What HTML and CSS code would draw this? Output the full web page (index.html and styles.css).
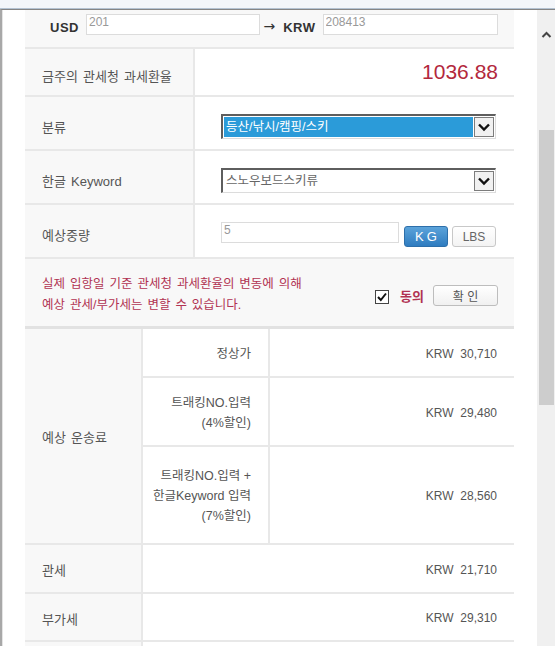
FILE: index.html
```html
<!DOCTYPE html>
<html lang="ko">
<head>
    <meta charset="UTF-8">
    <meta name="viewport" content="width=device-width, initial-scale=1.0">
    <title>예상 관세/부가세 계산</title>
    <link rel="stylesheet" href="styles.css">
</head>
<body>
    <!-- Window chrome (address bar edge) -->
    <div class="chrome"></div>

    <div class="window">
        <div class="page">
            <div class="panel">
                <!-- Currency conversion -->
                <div class="row row-rate">
                    <span class="cur">USD</span>
                    <input class="field field-usd" type="text" value="201">
                    <span class="arrow">→</span>
                    <span class="cur">KRW</span>
                    <input class="field field-krw" type="text" value="208413">
                </div>

                <div class="row row-exchange">
                    <div class="label">금주의 관세청 과세환율</div>
                    <div class="value value-rate">1036.88</div>
                </div>

                <div class="row row-form">
                    <div class="label">분류</div>
                    <div class="value">
                        <div class="select">
                            <span class="select-text select-active">등산/낚시/캠핑/스키</span>
                            <span class="select-arrow">
                                <svg width="14" height="9" viewBox="0 0 14 9"><path d="M2 1.5 L7 6.5 L12 1.5" fill="none" stroke="#111" stroke-width="2.4"/></svg>
                            </span>
                        </div>
                    </div>
                </div>

                <div class="row row-form">
                    <div class="label">한글 Keyword</div>
                    <div class="value">
                        <div class="select">
                            <span class="select-text">스노우보드스키류</span>
                            <span class="select-arrow">
                                <svg width="14" height="9" viewBox="0 0 14 9"><path d="M2 1.5 L7 6.5 L12 1.5" fill="none" stroke="#111" stroke-width="2.4"/></svg>
                            </span>
                        </div>
                    </div>
                </div>

                <div class="row row-form">
                    <div class="label">예상중량</div>
                    <div class="value value-weight">
                        <input class="field field-weight" type="text" value="5">
                        <button class="unit unit-on">KG</button>
                        <button class="unit">LBS</button>
                    </div>
                </div>

                <!-- Notice + agreement -->
                <div class="notice">
                    <p class="notice-text">실제 입항일 기준 관세청 과세환율의 변동에 의해<br>예상 관세/부가세는 변할 수 있습니다.</p>
                    <div class="agree">
                        <span class="check">
                            <svg width="12" height="12" viewBox="0 0 12 12"><path d="M2 6 L4.8 9 L10 2.5" fill="none" stroke="#111" stroke-width="2"/></svg>
                        </span>
                        <span class="agree-label">동의</span>
                        <button class="confirm">확 인</button>
                    </div>
                </div>

                <!-- Shipping fee -->
                <div class="fee">
                    <div class="fee-label">예상 운송료</div>
                    <div class="fee-rows">
                        <div class="fee-row fee-row-1">
                            <div class="sub">정상가</div>
                            <div class="amount">KRW&nbsp;&nbsp;30,710</div>
                        </div>
                        <div class="fee-row fee-row-2">
                            <div class="sub">트래킹NO.입력<br>(4%할인)</div>
                            <div class="amount">KRW&nbsp;&nbsp;29,480</div>
                        </div>
                        <div class="fee-row fee-row-3">
                            <div class="sub">트래킹NO.입력 +<br>한글Keyword 입력<br>(7%할인)</div>
                            <div class="amount">KRW&nbsp;&nbsp;28,560</div>
                        </div>
                    </div>
                </div>

                <div class="sum-row sum-row-1">
                    <div class="sum-label">관세</div>
                    <div class="amount">KRW&nbsp;&nbsp;21,710</div>
                </div>
                <div class="sum-row sum-row-2">
                    <div class="sum-label">부가세</div>
                    <div class="amount">KRW&nbsp;&nbsp;29,310</div>
                </div>
                <div class="sum-row">
                    <div class="sum-label"></div>
                    <div class="amount"></div>
                </div>
            </div>
        </div>

        <!-- Scrollbar -->
        <div class="scrollbar">
            <span class="scroll-up">
                <svg width="11" height="7" viewBox="0 0 11 7"><path d="M1.5 6 L5.5 2 L9.5 6" fill="none" stroke="#444" stroke-width="2"/></svg>
            </span>
            <span class="scroll-thumb"></span>
        </div>
    </div>
</body>
</html>
```

FILE: styles.css
```css
/* General page */
body {
    margin: 0;
    font-family: "Liberation Sans", "Noto Sans CJK KR", sans-serif;
    font-size: 12px;
    color: #555;
    background-color: #fff;
    overflow: hidden;
}

/* Window chrome */
.chrome {
    height: 8px;
    background-color: #f3f6fa;
    border-bottom: 1px solid #b3c2d2;
}

.window {
    display: flex;
    border-top: 1px solid #858585;
    border-left: 2px solid #a8a8a8;
    height: 640px;
}

.page {
    flex: 1;
    padding-left: 22px;
    border-left: 1px solid #e4e4e4;
}

.panel {
    width: 489px;
    background-color: #f8f8f8;
}

/* Rows */
.row {
    display: flex;
    box-sizing: border-box;
    border-bottom: 2px solid #e8e8e8;
}

.row-exchange {
    height: 48px;
}

.row-form {
    height: 54px;
}

.label {
    width: 170px;
    box-sizing: border-box;
    padding: 6px 0 0 17px;
    border-right: 2px solid #e8e8e8;
    display: flex;
    align-items: center;
    font-size: 13px;
    word-spacing: 1.5px;
}

.value {
    flex: 1;
    display: flex;
    align-items: flex-start;
    padding: 17px 16px 0 26px;
    background-color: #fff;
}

/* USD / KRW row */
.row-rate {
    height: 39px;
    padding: 4px 16px 0 25px;
    align-items: flex-start;
}

.cur {
    font-size: 13px;
    font-weight: bold;
    letter-spacing: 0.5px;
    color: #333;
    line-height: 21px;
    margin-top: 3px;
}

.arrow {
    font-family: "DejaVu Sans", sans-serif;
    font-size: 14px;
    color: #333;
    line-height: 21px;
    margin: 2px 8px 0 3px;
}

.field {
    box-sizing: border-box;
    height: 21px;
    border: 1px solid #dcdcdc;
    padding: 1px 2px 7px;
    font-family: "Liberation Sans", sans-serif;
    font-size: 12px;
    color: #999;
    background-color: #fff;
    outline: none;
}

.field-usd {
    width: 176px;
    margin-left: 7px;
}

.field-krw {
    width: 177px;
    margin-left: 7px;
}

/* Exchange rate */
.value-rate {
    align-items: center;
    justify-content: flex-end;
    padding: 0 16px 0 0;
    font-size: 21px;
    color: #b3283c;
}

/* Fake dropdowns */
.select {
    width: 275px;
    height: 25px;
    box-sizing: border-box;
    border-top: 2px solid #5e5e5e;
    border-left: 2px solid #5e5e5e;
    border-right: 1px solid #dcdcdc;
    border-bottom: 1px solid #dcdcdc;
    padding: 1px;
    display: flex;
    background-color: #fff;
}

.select-text {
    flex: 1;
    line-height: 20px;
    padding-left: 2px;
    font-size: 12.5px;
    color: #666;
}

.select-active {
    background-color: #2b9bd9;
    color: #fff;
}

.select-arrow {
    width: 20px;
    margin-left: 1px;
    border: 1px solid #7c7c7c;
    box-sizing: border-box;
    background-color: #f1f1f1;
    display: flex;
    align-items: center;
    justify-content: center;
}

/* Weight */
.field-weight {
    width: 178px;
}

.unit {
    width: 44px;
    height: 21px;
    margin: 4px 0 0 4px;
    border: 1px solid #c8c8c8;
    border-radius: 3px;
    background: linear-gradient(#fff, #f3f3f3);
    font-family: "Liberation Sans", sans-serif;
    font-size: 12px;
    color: #666;
    padding: 0;
}

.unit-on {
    margin-left: 5px;
    border-color: #2d6faa;
    background: linear-gradient(#5ba3da, #2f7cc0);
    color: #fff;
    font-size: 13px;
    letter-spacing: 3px;
    text-indent: 3px;
}

/* Notice */
.notice {
    height: 70px;
    box-sizing: border-box;
    border-bottom: 3px solid #e2e2e2;
    padding: 5px 16px 0 17px;
    display: flex;
    align-items: center;
    justify-content: space-between;
}

.notice-text {
    margin: 0;
    color: #b13352;
    font-size: 12.5px;
    line-height: 21px;
    word-spacing: 1.5px;
}

.agree {
    display: flex;
    align-items: center;
}

.check {
    width: 14px;
    height: 14px;
    box-sizing: border-box;
    border: 1px solid #444;
    background-color: #fff;
    display: flex;
    align-items: center;
    justify-content: center;
    margin-right: 11px;
    margin-top: 3px;
}

.agree-label {
    font-size: 13px;
    font-weight: bold;
    color: #b13352;
}

.confirm {
    width: 65px;
    height: 21px;
    margin-left: 9px;
    padding: 0;
    border: 1px solid #bdbdbd;
    border-radius: 3px;
    background: linear-gradient(#fff, #f0f0f0);
    font-family: "Liberation Sans", "Noto Sans CJK KR", sans-serif;
    font-size: 12px;
    color: #555;
}

/* Shipping fee table */
.fee {
    display: flex;
    border-bottom: 2px solid #e8e8e8;
}

.fee-label {
    width: 118px;
    box-sizing: border-box;
    padding: 0 0 0 17px;
    border-right: 2px solid #e8e8e8;
    display: flex;
    align-items: center;
    font-size: 13px;
    word-spacing: 1.5px;
}

.fee-rows {
    flex: 1;
    background-color: #fff;
}

.fee-row {
    display: flex;
    box-sizing: border-box;
    border-bottom: 2px solid #e8e8e8;
}

.fee-row-1 {
    height: 49px;
}

.fee-row-2 {
    height: 69px;
}

.fee-row-3 {
    height: 96px;
    border-bottom: none;
}

.sub {
    width: 127px;
    box-sizing: border-box;
    padding: 2px 17px 0 0;
    border-right: 2px solid #e8e8e8;
    display: flex;
    align-items: center;
    justify-content: flex-end;
    text-align: right;
    font-size: 12.5px;
    line-height: 20px;
}

.amount {
    flex: 1;
    display: flex;
    align-items: center;
    justify-content: flex-end;
    padding: 2px 17px 0 0;
    background-color: #fff;
}

/* Duty / VAT rows */
.sum-row {
    display: flex;
    height: 48px;
    box-sizing: border-box;
    border-bottom: 2px solid #e8e8e8;
}

.sum-row-1 {
    height: 49px;
}

.sum-label {
    width: 118px;
    box-sizing: border-box;
    padding: 2px 0 0 17px;
    border-right: 2px solid #e8e8e8;
    display: flex;
    align-items: center;
    font-size: 13px;
}

/* Scrollbar */
.scrollbar {
    width: 18px;
    background-color: #f0f0f0;
    display: flex;
    flex-direction: column;
    align-items: center;
}

.scroll-up {
    margin-top: 21px;
    height: 7px;
    display: flex;
}

.scroll-thumb {
    width: 15px;
    height: 275px;
    margin-top: 92px;
    background-color: #cdcdcd;
}
```
